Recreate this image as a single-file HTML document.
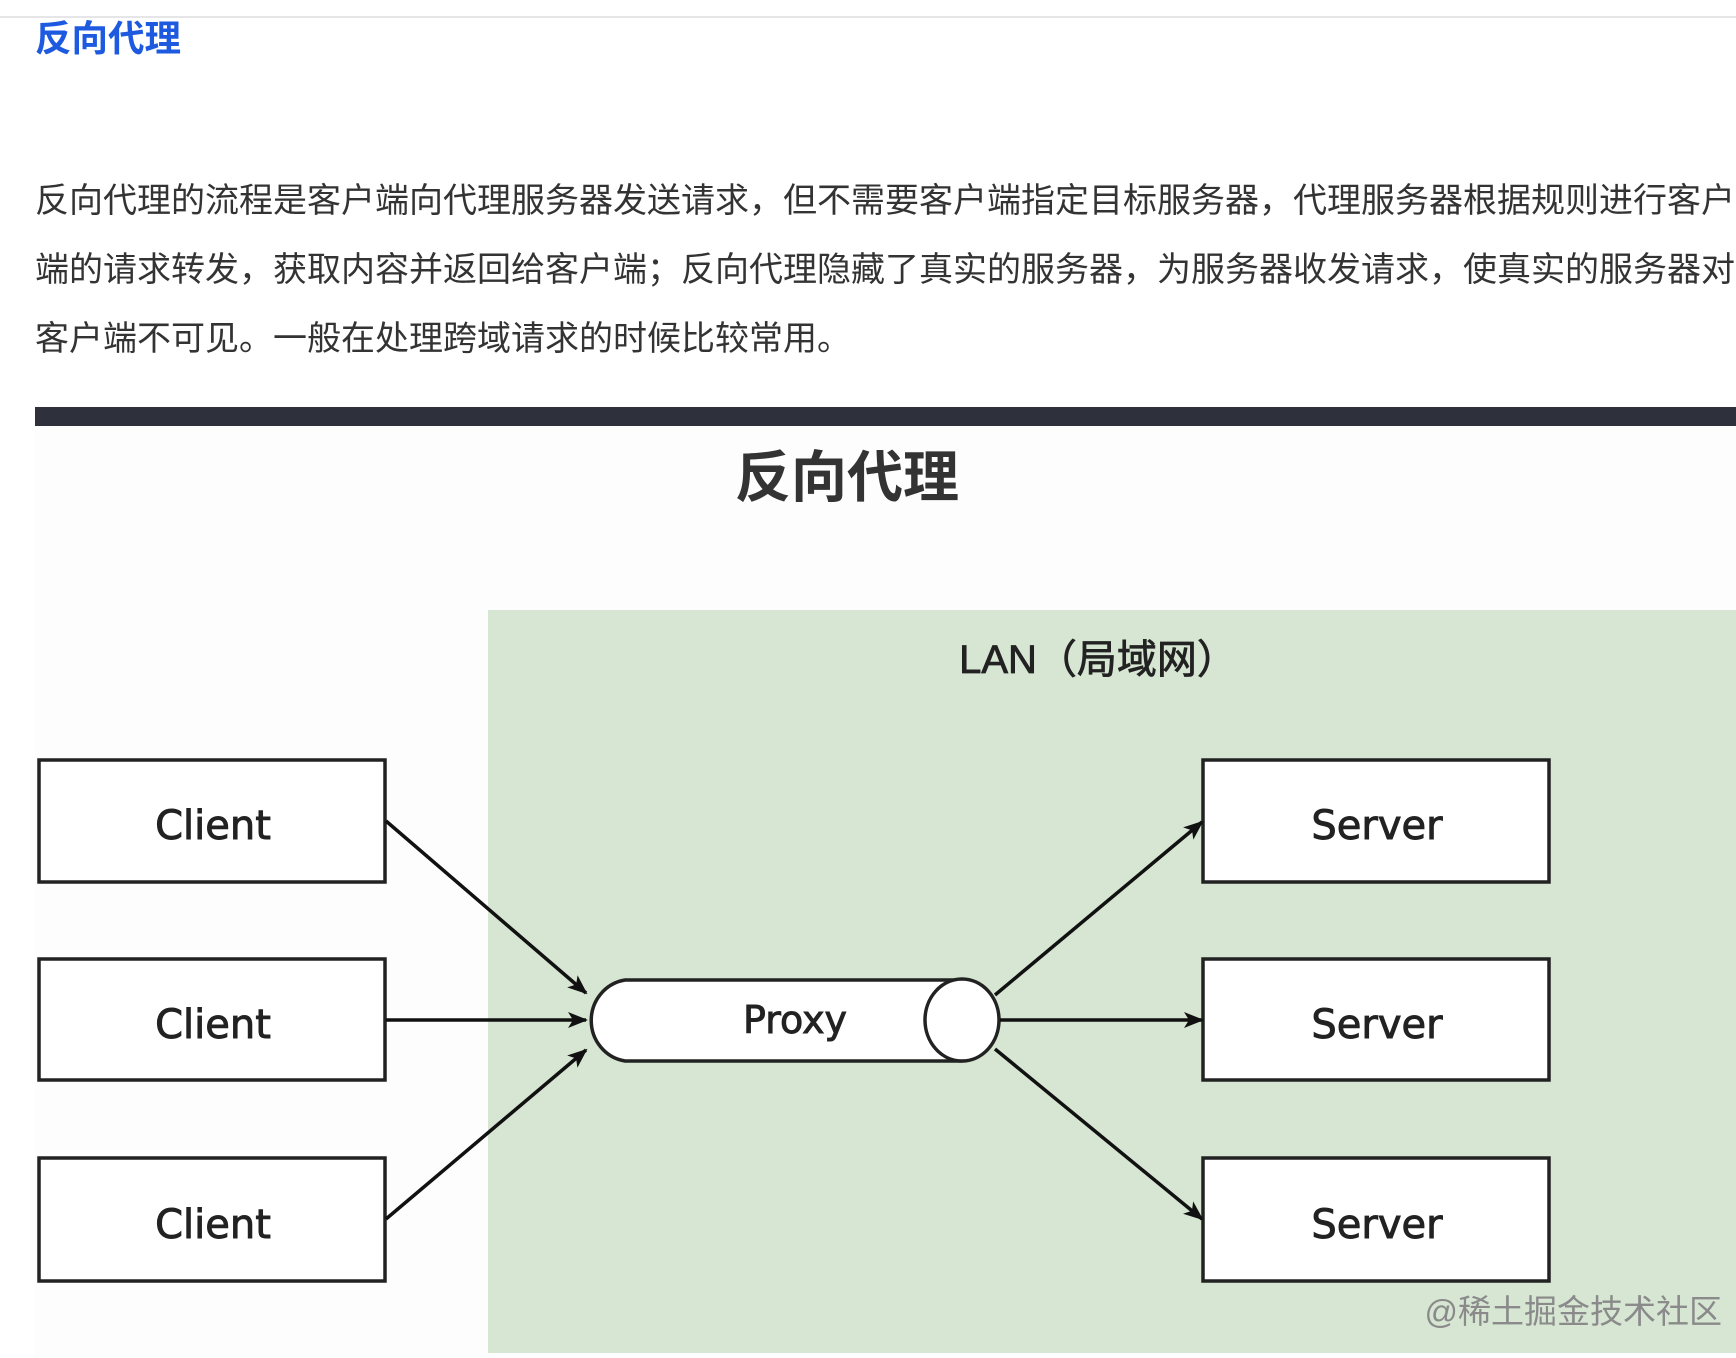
<!DOCTYPE html>
<html><head><meta charset="utf-8"><style>
html,body{margin:0;padding:0;background:#fff;width:1736px;height:1358px;overflow:hidden;font-family:"Liberation Sans","Noto Sans CJK SC",sans-serif}
.top{position:absolute;left:0;top:16px;width:1736px;height:2px;background:#e6e6e8}
h2{position:absolute;left:35px;top:14px;margin:0;font-size:36.5px;font-weight:bold;color:#1e5ae0;line-height:50px}
p{position:absolute;left:35px;top:167px;margin:0;width:1760px;font-size:34px;line-height:69px;color:#333;white-space:nowrap}
.bar{position:absolute;left:35px;top:407px;width:1701px;height:19px;background:#2e303b}
svg{position:absolute;left:0;top:0}
</style></head><body>
<div class="top"></div>
<h2>反向代理</h2>
<p>反向代理的流程是客户端向代理服务器发送请求，但不需要客户端指定目标服务器，代理服务器根据规则进行客户<br>端的请求转发，获取内容并返回给客户端；反向代理隐藏了真实的服务器，为服务器收发请求，使真实的服务器对<br>客户端不可见。一般在处理跨域请求的时候比较常用。</p>
<div class="bar"></div>
<svg width="1736" height="1358" viewBox="0 0 1736 1358">
<defs><marker id="a" markerWidth="20" markerHeight="20" refX="18" refY="10" orient="auto" markerUnits="userSpaceOnUse" viewBox="0 0 20 20"><path d="M0,2 L20,10 L0,18 L5,10 Z" fill="#111"/></marker></defs>
<rect x="35" y="426" width="1701" height="932" fill="#fdfdfd"/>
<rect x="488" y="610" width="1248" height="743" fill="#d6e6d3"/>
<text x="847" y="497" font-size="56" font-weight="bold" fill="#333" text-anchor="middle" font-family="Noto Sans CJK SC,sans-serif">反向代理</text>
<text x="1098" y="673" font-size="40" fill="#222" stroke="#222" stroke-width="0.8" text-anchor="middle" font-family="Liberation Sans,Noto Sans CJK SC,sans-serif">LAN（局域网）</text>
<g fill="#fff" stroke="#222" stroke-width="3.5">
<rect x="39" y="760" width="346" height="122"/><rect x="39" y="959" width="346" height="121"/><rect x="39" y="1158" width="346" height="123"/>
<rect x="1203" y="760" width="346" height="122"/><rect x="1203" y="959" width="346" height="121"/><rect x="1203" y="1158" width="346" height="123"/>
<path d="M625,980 H962 A37,41 0 0 1 962,1061 H625 A40,41 0 0 1 625,980 Z"/>
<ellipse cx="962" cy="1020" rx="37" ry="41"/>
</g>
<g stroke="#111" stroke-width="3.5" marker-end="url(#a)">
<line x1="386" y1="821" x2="586" y2="993"/><line x1="386" y1="1020" x2="586" y2="1020"/><line x1="386" y1="1219" x2="586" y2="1050"/>
<line x1="995" y1="995" x2="1202" y2="822"/><line x1="1000" y1="1020" x2="1202" y2="1020"/><line x1="995" y1="1049" x2="1202" y2="1219"/>
</g>
<g font-size="40" fill="#222" stroke="#222" stroke-width="0.9" text-anchor="middle" font-family="DejaVu Sans,sans-serif">
<text x="213" y="839">Client</text><text x="213" y="1038">Client</text><text x="213" y="1238">Client</text>
<text x="1377" y="839">Server</text><text x="1377" y="1038">Server</text><text x="1377" y="1238">Server</text>
<text x="795" y="1033" font-size="38">Proxy</text>
</g>
<text x="1722" y="1323" font-size="33" fill="#8a8a8a" text-anchor="end" font-family="Liberation Sans,Noto Sans CJK SC,sans-serif">@稀土掘金技术社区</text>
</svg>
</body></html>
